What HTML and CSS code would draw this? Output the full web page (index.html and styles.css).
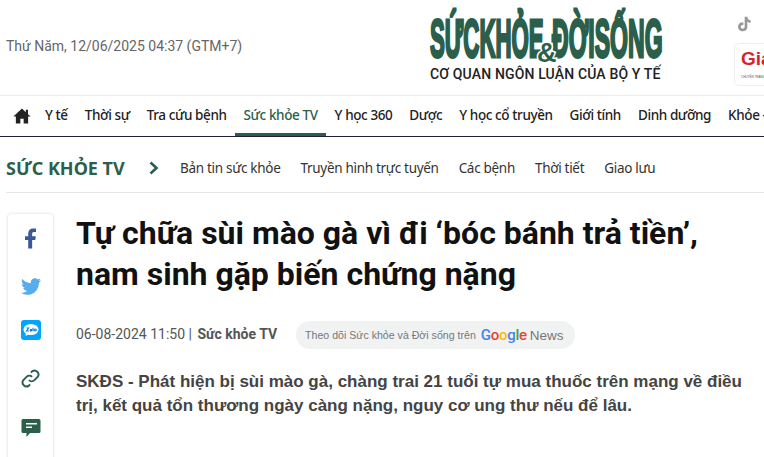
FILE: index.html
```html
<!DOCTYPE html>
<html>
<head>
    <meta charset="utf-8">
    <link rel="stylesheet" href="styles.css">
</head>
<body>
    <div class="header">
        <div class="date">Thứ Năm, 12/06/2025 04:37 (GTM+7)</div>
        <div class="logo">
            <div class="logo-name">
                <span class="logo-word">SỨCKHỎE</span>
                <span class="logo-amp">&amp;</span>
                <span class="logo-word logo-word-end">ĐỜISỐNG</span>
            </div>
            <div class="logo-sub">CƠ QUAN NGÔN LUẬN CỦA BỘ Y TẾ</div>
        </div>
        <div class="header-right">
            <svg class="tiktok" viewBox="0 0 24 24" width="16" height="18">
                <path fill="#999" d="M13 1h4c.3 3 2 5 5 5.300v4c-2 0-3.700-.6-5-1.600V16c0 4.300-3.200 7-7 7-3.900 0-7-3-7-6.900 0-4.200 3.600-7.400 8-6.800v4.200c-2-.5-3.900.8-3.900 2.600 0 1.600 1.300 2.900 2.900 2.900 1.700 0 3-1.200 3-3.200V1z"/>
            </svg>
            <div class="promo">
                <span class="promo-name">Gia</span>
                <span class="promo-sub">CHUYÊN TRANG</span>
            </div>
        </div>
    </div>

    <div class="nav">
        <a class="nav-home">
            <svg viewBox="0 0 24 24" width="18" height="18">
                <path fill="#222" d="M12 2 0.500 12.500h3.300V22h6v-6.500h4.400V22h6v-9.500h3.300L20 9.700V3.500h-3v3.500z"/>
            </svg>
        </a>
        <a class="nav-item">Y tế</a>
        <a class="nav-item">Thời sự</a>
        <a class="nav-item">Tra cứu bệnh</a>
        <a class="nav-item active">Sức khỏe TV</a>
        <a class="nav-item">Y học 360</a>
        <a class="nav-item">Dược</a>
        <a class="nav-item">Y học cổ truyền</a>
        <a class="nav-item">Giới tính</a>
        <a class="nav-item">Dinh dưỡng</a>
        <a class="nav-item">Khỏe - Đẹp</a>
    </div>

    <div class="subnav">
        <div class="subnav-title">SỨC KHỎE TV</div>
        <svg class="subnav-arrow" viewBox="0 0 10 14" width="10" height="14">
            <path fill="none" stroke="#2b5f4b" stroke-width="2.600" d="M1.500 1.500 7.500 7l-6 5.500"/>
        </svg>
        <a class="subnav-item">Bản tin sức khỏe</a>
        <a class="subnav-item">Truyền hình trực tuyến</a>
        <a class="subnav-item">Các bệnh</a>
        <a class="subnav-item">Thời tiết</a>
        <a class="subnav-item">Giao lưu</a>
    </div>

    <div class="content">
        <div class="share">
            <svg class="share-fb" viewBox="0 0 12 22" width="11" height="21">
                <path fill="#3b5998" d="M3.500 22V12.500H0V8.500h3.500V5.500C3.500 2 5.600 0 8.800 0c1.400 0 2.600.1 3.200.2v3.700H9.900c-1.700 0-2.100.8-2.100 2v2.600h4l-.6 4H7.800V22z"/>
            </svg>
            <svg class="share-tw" viewBox="0 0 24 20" width="20" height="17">
                <path fill="#55acee" d="M24 2.400c-.9.4-1.800.7-2.800.8 1-.6 1.800-1.600 2.200-2.700-1 .6-2 1-3.100 1.200C19.300.7 18 0 16.600 0c-2.700 0-4.900 2.200-4.900 4.900 0 .4 0 .8.100 1.100C7.700 5.800 4.100 3.900 1.700.9 1.200 1.600 1 2.500 1 3.400c0 1.700.9 3.200 2.200 4.100-.8 0-1.600-.2-2.200-.6v.1c0 2.400 1.700 4.400 3.900 4.800-.4.100-.8.200-1.300.2-.3 0-.6 0-.9-.1.600 2 2.400 3.400 4.600 3.400-1.700 1.300-3.800 2.100-6.100 2.100-.4 0-.8 0-1.200-.1C2.200 19.200 4.800 20 7.500 20c9.100 0 14-7.500 14-14v-.6c1-.7 1.800-1.600 2.500-3z"/>
            </svg>
            <svg class="share-zalo" viewBox="0 0 20 20" width="20" height="20">
                <rect width="20" height="20" rx="3" fill="#03a5fa"/>
                <ellipse cx="10" cy="9.500" rx="7.500" ry="5.500" fill="#fff"/>
                <path fill="#fff" d="M5 12.500 4.500 16l3.500-2z"/>
                <path fill="none" stroke="#0a7fd0" stroke-width="1.100" d="M5.500 8h2.200l-2.200 3h2.400M9 9.500h1.600v1.500M10.600 10.200c-1.200-.6-1.800.8-.8.9.4 0 .8-.2.8-.5M12 7.700v3.300M14.300 9a1 1 0 1 0 .01 0z"/>
            </svg>
            <svg class="share-link" viewBox="0 0 24 24" width="19" height="19" fill="none" stroke="#2b5f4b" stroke-width="2.400">
                <path d="M10 14a5 5 0 0 0 7 0l4-4a5 5 0 0 0-7-7l-1.500 1.500"/>
                <path d="M14 10a5 5 0 0 0-7 0l-4 4a5 5 0 0 0 7 7l1.500-1.500"/>
            </svg>
            <svg class="share-comment" viewBox="0 0 20 20" width="20" height="20">
                <path fill="#2b5f4b" d="M2 1h16a1.500 1.500 0 0 1 1.500 1.500v11A1.500 1.500 0 0 1 18 15H9l-3.500 4v-4H2a1.500 1.500 0 0 1-1.500-1.500v-11A1.500 1.500 0 0 1 2 1z"/>
                <rect x="5" y="5" width="11" height="1.500" fill="#fff"/>
                <rect x="5" y="8.500" width="6" height="1.500" fill="#fff"/>
            </svg>
        </div>
        <div class="article">
            <h1 class="title">Tự chữa sùi mào gà vì đi ‘bóc bánh trả tiền’, nam sinh gặp biến chứng nặng</h1>
            <div class="meta">
                <span class="meta-date">06-08-2024 11:50 | <strong>Sức khỏe TV</strong></span>
                <a class="follow">
                    <span class="follow-text">Theo dõi Sức khỏe và Đời sống trên</span>
                    <span class="google"><span class="g-blue">G</span><span class="g-red">o</span><span class="g-yellow">o</span><span class="g-blue">g</span><span class="g-green">l</span><span class="g-red">e</span></span>
                    <span class="follow-news">News</span>
                </a>
            </div>
            <p class="sapo">SKĐS - Phát hiện bị sùi mào gà, chàng trai 21 tuổi tự mua thuốc trên mạng về điều trị, kết quả tổn thương ngày càng nặng, nguy cơ ung thư nếu để lâu.</p>
        </div>
    </div>
</body>
</html>
```

FILE: styles.css
```css
html, body {
    margin: 0;
    height: 457px;
    overflow: hidden;
}

body {
    width: 764px;
    background: #fff;
    font-family: "Liberation Sans", Arial, sans-serif;
}

.header {
    display: flex;
    height: 95px;
    border-bottom: 1px solid #ececf2;
    padding-left: 6px;
    overflow: hidden;
}

.date {
    flex-shrink: 0;
    width: 424px;
    padding-top: 37px;
    font-family: Roboto, sans-serif;
    font-size: 14px;
    line-height: 18px;
    color: #666;
}

.logo {
    flex-shrink: 0;
    width: 306px;
    padding-top: 12px;
}

.logo-name {
    display: flex;
    width: 232px;
    height: 54px;
    align-items: flex-end;
    color: #2b5f4b;
    font-weight: bold;
}

.logo-word {
    flex-shrink: 0;
    width: 110px;
    font-size: 53px;
    line-height: 54px;
    -webkit-text-stroke: 3px #2b5f4b;
    transform: scaleX(0.42);
    transform-origin: left center;
    white-space: nowrap;
}

.logo-word-end {
    transform: scaleX(0.435);
}

.logo-amp {
    flex-shrink: 0;
    width: 18px;
    margin: 0 -3px;
    font-size: 27px;
    line-height: 26px;
    text-align: center;
    -webkit-text-stroke: 3px #fff;
    paint-order: stroke fill;
    z-index: 1;
}

.logo-sub {
    margin-top: -2px;
    font-family: Roboto, sans-serif;
    font-size: 14px;
    font-weight: 500;
    letter-spacing: 0.15px;
    line-height: 20px;
    color: #222;
    white-space: nowrap;
}

.header-right {
    display: flex;
    flex-direction: column;
    flex-shrink: 0;
    padding-top: 15px;
}

.promo {
    width: 60px;
    height: 41px;
    margin-top: 10px;
    margin-left: -2px;
    border: 1px solid #eee;
    border-radius: 5px;
    padding-left: 6px;
}

.promo-name {
    display: block;
    margin-top: 4px;
    font-size: 19px;
    font-weight: bold;
    line-height: 22px;
    color: #d8232a;
}

.promo-sub {
    display: block;
    margin-top: 5px;
    font-size: 3px;
    color: #555;
    white-space: nowrap;
}

.nav {
    display: flex;
    height: 40px;
    border-bottom: 1px solid #1f1f3a;
    padding-left: 13px;
    font-family: "Noto Sans", sans-serif;
    font-size: 13.5px;
    font-weight: 500;
    letter-spacing: -0.4px;
    white-space: nowrap;
}

.nav-home {
    display: flex;
    align-items: center;
    width: 23.5px;
    flex-shrink: 0;
}

.nav-item {
    flex-shrink: 0;
    padding: 0 8.5px;
    line-height: 38px;
    color: #222;
}

.nav-item.active {
    color: #2b5f4b;
    border-bottom: 3px solid #2b5f4b;
    height: 37px;
}

.subnav {
    display: flex;
    align-items: center;
    height: 56px;
    box-sizing: border-box;
    margin-left: 6px;
    padding-top: 6px;
    border-bottom: 1px solid #e5e5e5;
    font-family: "Noto Sans", sans-serif;
    white-space: nowrap;
}

.subnav-title {
    flex-shrink: 0;
    width: 143px;
    font-size: 18px;
    font-weight: 700;
    color: #2b5f4b;
}

.subnav-arrow {
    flex-shrink: 0;
    margin-right: 21px;
}

.subnav-item {
    flex-shrink: 0;
    margin-right: 20px;
    font-size: 13.5px;
    letter-spacing: -0.3px;
    color: #333;
}

.content {
    display: flex;
    padding: 20px 0 0 7px;
}

.share {
    display: flex;
    flex-direction: column;
    align-items: center;
    flex-shrink: 0;
    box-sizing: border-box;
    width: 47px;
    height: 300px;
    padding-top: 14px;
    border: 1px solid #f0f0f0;
    border-radius: 4px;
    box-shadow: 0 0 3px rgba(0, 0, 0, 0.06);
}

.share-tw {
    margin-top: 29px;
}

.share-zalo {
    margin-top: 25px;
}

.share-link {
    margin-top: 29px;
}

.share-comment {
    margin-top: 30px;
}

.article {
    width: 670px;
    margin-left: 22px;
}

.title {
    margin: 0;
    font-family: Roboto, sans-serif;
    font-size: 32px;
    font-weight: 700;
    line-height: 41px;
    color: #111;
}

.meta {
    display: flex;
    align-items: center;
    margin-top: 26px;
    height: 28px;
}

.meta-date {
    margin-bottom: 2px;
    font-family: Roboto, sans-serif;
    font-size: 14px;
    color: #555;
}

.meta-date strong {
    margin-left: 2px;
    font-weight: 700;
}

.follow {
    display: flex;
    align-items: center;
    height: 28px;
    margin-left: 19px;
    padding: 0 12px 0 9px;
    border-radius: 14px;
    background: #f1f2f2;
}

.follow-text {
    font-size: 10.6px;
    color: #777;
}

.google {
    margin-left: 5px;
    font-family: Roboto, sans-serif;
    font-size: 15px;
    font-weight: 500;
    letter-spacing: -0.3px;
}

.g-blue { color: #4285f4; }
.g-red { color: #ea4335; }
.g-yellow { color: #fbbc05; }
.g-green { color: #34a853; }

.follow-news {
    margin-left: 3px;
    font-size: 13.5px;
    color: #777;
}

.sapo {
    margin: 21px 0 0;
    font-size: 17px;
    font-weight: bold;
    line-height: 24px;
    color: #444;
}
```
